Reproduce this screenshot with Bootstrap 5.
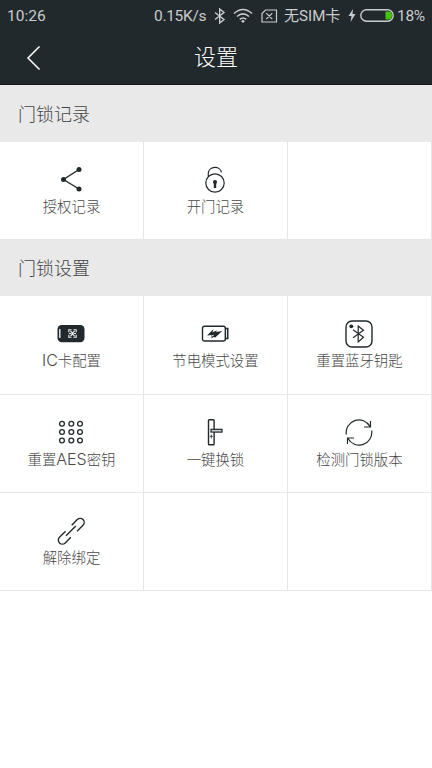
<!DOCTYPE html>
<html lang="zh-CN">
<head>
<meta charset="utf-8">
<meta name="viewport" content="width=device-width, initial-scale=1">
<title>设置</title>
<link href="https://cdn.jsdelivr.net/npm/bootstrap@5.3.0/dist/css/bootstrap.min.css" rel="stylesheet">
<style>
body{font-family:Roboto,"Noto Sans CJK SC",sans-serif;color:#484848;background:#fff;overflow:hidden}
.top-area{background:#22292c;height:85px;border-bottom:1px solid #15191b}
.status{height:31px;color:#c9cccd;font-size:15.5px;line-height:32px;padding-left:7px}
.status svg{flex:none}
.w-rate{width:60px;letter-spacing:-.3px}.w-bt{width:19px}.w-wifi{width:28px}.w-sim{width:23px}.w-carrier{width:64px;font-size:15.1px}.w-bolt{width:12px}.w-bat{width:37px}.w-pct{width:35px;letter-spacing:-.3px}
.titlebar{height:53px;color:#fff}
.titlebar h1{font-size:22px;font-weight:300;line-height:53px}
.side{width:72px}
.section-title{background:#e9e9e9;height:57px;padding-left:18px;font-size:18px;font-weight:300;line-height:59px;color:#444}
.section-title.second{height:56px;line-height:58px}
.cell{height:98px;border-right:1px solid #e6e6e6;border-bottom:1px solid #e6e6e6;padding-top:24px;font-family:Inter,"Noto Sans CJK SC",sans-serif;font-size:14.4px;font-weight:300;line-height:20px}
.cell.tall{height:99px}
.cell svg{fill:none;stroke:#22292c;stroke-width:1.4;margin-bottom:3px;flex:none}
.latin{font-size:16px;line-height:1}
</style>
<script src="https://cdn.jsdelivr.net/npm/bootstrap@5.3.0/dist/js/bootstrap.bundle.min.js"></script>
</head>
<body>
<header class="top-area">
  <div class="status d-flex align-items-center text-nowrap">
    <span class="me-auto">10:26</span>
    <span class="w-rate">0.15K/s</span>
    <span class="w-bt d-flex"><svg width="12" height="16" viewBox="0 0 12 16" fill="none" stroke="#c9cccd" stroke-width="1.4"><path d="M1 4.5 10 11.5 5.7 15V1L10 4.5 1 11.5"/></svg></span>
    <span class="w-wifi d-flex"><svg width="20" height="15" viewBox="0 0 20 15" fill="none" stroke="#c9cccd" stroke-width="1.6"><path d="M1 5.5Q10-2.5 19 5.5M4 8.5Q10 3.2 16 8.5M6.8 11.3Q10 8.7 13.2 11.3"/><circle cx="10" cy="13.3" r="1.4" fill="#c9cccd" stroke="none"/></svg></span>
    <span class="w-sim d-flex"><svg width="17" height="14" viewBox="0 0 17 14" fill="none" stroke="#c9cccd" stroke-width="1.2"><path d="M4.5 1H15.5V13H1V4.5ZM5.3 4.2l6 6M11.3 4.2l-6 6"/></svg></span>
    <span class="w-carrier">无SIM卡</span>
    <span class="w-bolt d-flex"><svg width="8" height="13" viewBox="0 0 8 13"><path d="M5 0 .5 7H3.5L2.5 13 7.5 5H4.5Z" fill="#c9cccd"/></svg></span>
    <span class="w-bat d-flex"><svg width="34" height="13" viewBox="0 0 34 13"><rect x=".8" y=".8" width="32.4" height="11.4" rx="5.7" fill="none" stroke="#c9cccd" stroke-width="1.4"/><path d="M25.5 2.5H28a4 4 0 0 1 0 8H25.5Z" fill="#43c30c"/></svg></span>
    <span class="w-pct">18%</span>
  </div>
  <div class="titlebar d-flex">
    <div class="side d-flex align-items-center"><svg class="ms-4" width="20" height="28" viewBox="0 0 20 28" fill="none" stroke="#fff" stroke-width="1.5"><path d="M15.5 2.5 4 14 15.5 25.5"/></svg></div>
    <h1 class="flex-fill text-center m-0">设置</h1>
    <div class="side"></div>
  </div>
</header>
<main>
  <h2 class="section-title m-0">门锁记录</h2>
  <div class="row g-0">
    <div class="col-4"><div class="cell d-flex flex-column align-items-center">
      <svg width="28" height="28" viewBox="0 0 28 28"><path d="M22 3.5 6.5 13.5 22 23"/><g fill="#22292c" stroke="none"><circle cx="22" cy="3.5" r="2.5"/><circle cx="6.5" cy="13.5" r="2.5"/><circle cx="22" cy="23" r="2.5"/></g></svg>
      <span>授权记录</span></div></div>
    <div class="col-4"><div class="cell d-flex flex-column align-items-center">
      <svg width="28" height="28" viewBox="0 0 28 28"><g stroke-width="1.2"><circle cx="14" cy="17" r="9.2"/><path d="M7.3 10.5V6.8A6.7 6.2 0 0 1 20.5 6.3"/></g><path d="M14 16v6" stroke-width="2.4"/><circle cx="14" cy="16" r="2" fill="#22292c" stroke="none"/></svg>
      <span>开门记录</span></div></div>
    <div class="col-4"><div class="cell"></div></div>
  </div>
  <h2 class="section-title second m-0">门锁设置</h2>
  <div class="row g-0">
    <div class="col-4"><div class="cell tall d-flex flex-column align-items-center">
      <svg width="28" height="28" viewBox="0 0 28 28"><rect x=".5" y="5" width="27" height="17.2" rx="4.2" fill="#22292c" stroke="none"/><path d="M2.8 9v9" stroke="#d4d9da" stroke-width="1.6"/><g stroke="#eef1f1" stroke-width="1.1"><path d="M12 9.8h2.5M16.5 9.8H19M12 17.3h2.5M16.5 17.3H19M11.8 9.3v3M19.2 9.3v3M11.8 14.8v3M19.2 14.8v3M12 13.5h2M17 13.5h2M13.5 11l1.5 1.5v2L13.5 16M17.5 11 16 12.5v2l1.5 1.5"/></g></svg>
      <span><span class="latin">IC</span>卡配置</span></div></div>
    <div class="col-4"><div class="cell tall d-flex flex-column align-items-center">
      <svg width="28" height="28" viewBox="0 0 28 28"><rect x="1.5" y="6.2" width="22.8" height="14.8" rx="2"/><path d="M25 8.5h1.7v10H25" stroke-width="1.6"/><path d="M12.5 9 6 15.5l4.5-.6v3.6l2-1.4 1.8.3 7-6.4-6 1 .5-1.6-4.2 1.8Z" fill="#22292c" stroke="none"/><path d="m10.9 15.2 2.2-.4-1.6 2Z" fill="#fff" stroke="none"/></svg>
      <span>节电模式设置</span></div></div>
    <div class="col-4"><div class="cell tall d-flex flex-column align-items-center">
      <svg width="28" height="28" viewBox="0 0 28 28"><rect x="1" y="1" width="26" height="26" rx="6"/><circle cx="6.3" cy="6.3" r="1.9" fill="#22292c" stroke="none"/><path d="m8 9.8 10.5 7.5-5.3 4.7V6l5.3 4.3L8 17.8" stroke-width="1.2"/></svg>
      <span>重置蓝牙钥匙</span></div></div>
    <div class="col-4"><div class="cell d-flex flex-column align-items-center">
      <svg width="28" height="28" viewBox="0 0 28 28"><g stroke-width="1.3"><circle cx="5" cy="4.7" r="2.4"/><circle cx="14.3" cy="4.7" r="2.4"/><circle cx="23" cy="4.7" r="2.4"/><circle cx="5" cy="13" r="2.4"/><circle cx="14.3" cy="13" r="2.4"/><circle cx="23" cy="13" r="2.4"/><circle cx="5" cy="21.5" r="2.4"/><circle cx="14.3" cy="21.5" r="2.4"/><circle cx="23" cy="21.5" r="2.4"/></g></svg>
      <span>重置<span class="latin">AES</span>密钥</span></div></div>
    <div class="col-4"><div class="cell d-flex flex-column align-items-center">
      <svg width="28" height="28" viewBox="0 0 28 28"><rect x="7.5" y=".8" width="5.6" height="25" rx=".8"/><rect x="10" y="10.3" width="11" height="2.8" fill="#c8cccd" stroke-width="1.2"/><path d="M10.3 15.5v4M8.8 17.3h3" stroke-width=".8"/></svg>
      <span>一键换锁</span></div></div>
    <div class="col-4"><div class="cell d-flex flex-column align-items-center">
      <svg width="28" height="28" viewBox="0 0 28 28"><path stroke-width="1.2" d="M1.3 15.5A12.7 12.7 0 0 1 25 7.5M26.7 11.5A12.7 12.7 0 0 1 3 19.5M25.5 2v6h-6.5M2.5 25v-6H9"/></svg>
      <span>检测门锁版本</span></div></div>
    <div class="col-4"><div class="cell d-flex flex-column align-items-center">
      <svg width="28" height="28" viewBox="0 0 28 28"><path d="M14.7 8.2 20.3 2.6a4 4 0 0 1 5.7 5.7L20 14.2M9 18.8 18.8 9M8.6 14.3 2.5 20.2a4 4 0 0 0 5.7 5.7L13.8 20.2"/></svg>
      <span>解除绑定</span></div></div>
    <div class="col-4"><div class="cell"></div></div>
    <div class="col-4"><div class="cell"></div></div>
  </div>
</main>
</body>
</html>
